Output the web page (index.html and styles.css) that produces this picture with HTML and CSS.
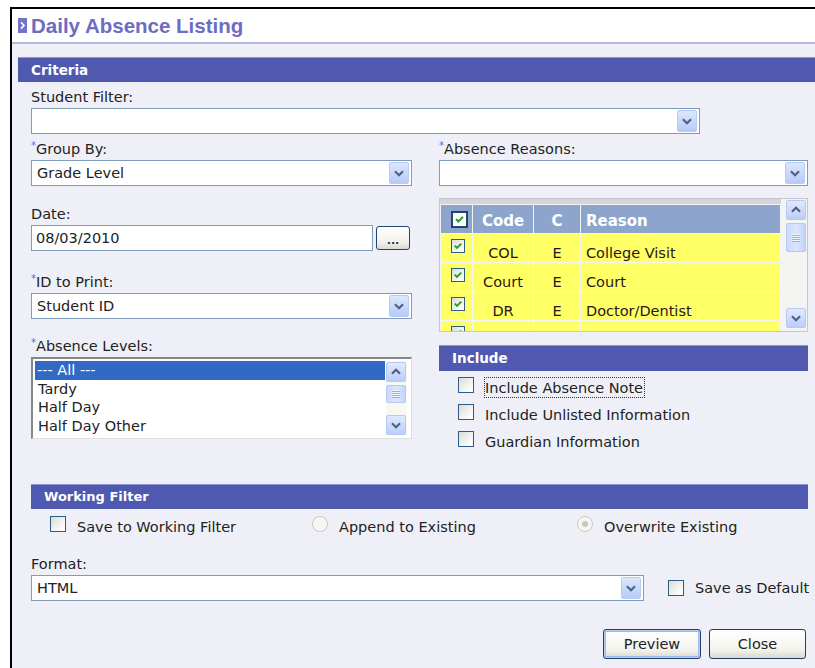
FILE: index.html
```html
<!DOCTYPE html>
<html lang="en">
<head>
<meta charset="utf-8">
<title>Daily Absence Listing</title>
<link rel="stylesheet" href="styles.css">
</head>
<body>
<svg class="icon-defs" width="0" height="0" aria-hidden="true">
  <defs>
    <symbol id="chev-down" viewBox="0 0 20 20"><path d="M5.5 8 L10 12.5 L14.5 8" fill="none" stroke="#4d6185" stroke-width="2.3"/></symbol>
    <symbol id="chev-up" viewBox="0 0 20 20"><path d="M5.5 12 L10 7.5 L14.5 12" fill="none" stroke="#4d6185" stroke-width="2.3"/></symbol>
    <symbol id="tick" viewBox="0 0 14 14"><path d="M3.2 6.6 L5.8 9.2 L10.8 4.2" fill="none" stroke="#21a121" stroke-width="2.2"/></symbol>
  </defs>
</svg>
<div class="window">
  <header class="title-bar">
    <svg class="title-icon" width="9" height="15" viewBox="0 0 9 15"><rect width="9" height="15" fill="#7272c9"/><path d="M3 4.3 L6 7.5 L3 10.7" fill="none" stroke="#fff" stroke-width="1.7"/></svg>
    <h1 class="title">Daily Absence Listing</h1>
  </header>
  <main class="content">
    <div class="section-bar">Criteria</div>
    <div class="form">
      <div class="field field-first">
        <span class="label">Student Filter:</span>
        <div class="select filter-select"><span class="select-value"></span><span class="drop-btn"><svg><use href="#chev-down"/></svg></span></div>
      </div>

      <div class="columns">
        <div class="col col-left">
          <div class="field">
            <span class="label"><span class="req">*</span>Group By:</span>
            <div class="select"><span class="select-value">Grade Level</span><span class="drop-btn"><svg><use href="#chev-down"/></svg></span></div>
          </div>
          <div class="field field-date">
            <span class="label">Date:</span>
            <div class="date-row">
              <div class="text-input">08/03/2010</div>
              <button class="dots-btn" type="button">...</button>
            </div>
          </div>
          <div class="field field-id">
            <span class="label"><span class="req">*</span>ID to Print:</span>
            <div class="select"><span class="select-value">Student ID</span><span class="drop-btn"><svg><use href="#chev-down"/></svg></span></div>
          </div>
          <div class="field field-levels">
            <span class="label"><span class="req">*</span>Absence Levels:</span>
            <div class="listbox">
              <ul class="list-items">
                <li class="selected">--- All ---</li>
                <li>Tardy</li>
                <li>Half Day</li>
                <li>Half Day Other</li>
              </ul>
              <div class="vscroll list-scroll">
                <span class="sb-btn"><svg><use href="#chev-up"/></svg></span>
                <span class="thumb"><span class="grip"></span></span>
                <span class="sb-btn sb-down"><svg><use href="#chev-down"/></svg></span>
              </div>
            </div>
          </div>
        </div>

        <div class="col col-right">
          <div class="field">
            <span class="label"><span class="req">*</span>Absence Reasons:</span>
            <div class="select"><span class="select-value"></span><span class="drop-btn"><svg><use href="#chev-down"/></svg></span></div>
          </div>
          <div class="grid">
            <div class="grid-body">
              <table class="reason-table">
                <colgroup><col class="c-cb"><col class="c-code"><col class="c-c"><col></colgroup>
                <thead>
                  <tr><th class="cb-head"><span class="cb head-cb"><svg><use href="#tick"/></svg></span></th><th>Code</th><th>C</th><th class="left">Reason</th></tr>
                </thead>
                <tbody>
                  <tr><td class="cb-cell"><span class="cb small"><svg><use href="#tick"/></svg></span></td><td class="center">COL</td><td class="center">E</td><td>College Visit</td></tr>
                  <tr><td class="cb-cell"><span class="cb small"><svg><use href="#tick"/></svg></span></td><td class="center">Court</td><td class="center">E</td><td>Court</td></tr>
                  <tr><td class="cb-cell"><span class="cb small"><svg><use href="#tick"/></svg></span></td><td class="center">DR</td><td class="center">E</td><td>Doctor/Dentist</td></tr>
                  <tr><td class="cb-cell"><span class="cb small"><svg><use href="#tick"/></svg></span></td><td></td><td></td><td></td></tr>
                </tbody>
              </table>
            </div>
            <div class="vscroll grid-scroll">
              <span class="sb-btn"><svg><use href="#chev-up"/></svg></span>
              <span class="thumb grid-thumb"><span class="grip"></span></span>
              <span class="sb-btn sb-down"><svg><use href="#chev-down"/></svg></span>
            </div>
          </div>
          <div class="section-bar include-bar">Include</div>
          <div class="check-list">
            <div class="check-row"><span class="cb"></span><span class="check-text focused">Include Absence Note</span></div>
            <div class="check-row"><span class="cb"></span><span class="check-text">Include Unlisted Information</span></div>
            <div class="check-row"><span class="cb"></span><span class="check-text">Guardian Information</span></div>
          </div>
        </div>
      </div>

      <div class="section-bar wf-bar">Working Filter</div>
      <div class="wf-row">
        <div class="check-row"><span class="cb"></span><span class="check-text">Save to Working Filter</span></div>
        <div class="check-row"><span class="radio"></span><span class="check-text">Append to Existing</span></div>
        <div class="check-row"><span class="radio checked"></span><span class="check-text">Overwrite Existing</span></div>
      </div>

      <div class="field field-format">
        <span class="label">Format:</span>
        <div class="format-row">
          <div class="select format-select"><span class="select-value">HTML</span><span class="drop-btn"><svg><use href="#chev-down"/></svg></span></div>
          <div class="check-row default-check"><span class="cb"></span><span class="check-text">Save as Default</span></div>
        </div>
      </div>

      <div class="actions">
        <button class="btn btn-default" type="button">Preview</button>
        <button class="btn" type="button">Close</button>
      </div>
    </div>
  </main>
</div>
</body>
</html>
```
FILE: styles.css
```css
* { box-sizing: border-box; }

html, body {
  margin: 0;
  padding: 0;
  background: #fff;
}

body {
  width: 815px;
  height: 668px;
  overflow: hidden;
  font-family: "DejaVu Sans", Verdana, sans-serif;
  font-size: 14.5px;
  color: #222;
}

.icon-defs { position: absolute; width: 0; height: 0; }

/* window frame */
.window {
  margin: 7px 0 0 10px;
  height: 661px;
  border-top: 2px solid #000;
  border-left: 2px solid #000;
  background: #eff0f7;
  overflow: hidden;
}

.title-bar {
  height: 35px;
  background: #fff;
  border-bottom: 2px solid #b5b9e0;
  display: flex;
  align-items: center;
  padding-left: 6px;
}

.title-icon { display: block; flex: none; }

.title {
  margin: 0 0 0 4px;
  font: bold 20.5px/33px "Liberation Sans", Arial, sans-serif;
  color: #6c6cc4;
}

.content { padding: 13px 0 0 6px; }

/* blue section headers */
.section-bar {
  height: 25px;
  background: #4e59af;
  border-top: 1px solid #8f96d2;
  color: #fff;
  font-weight: bold;
  font-size: 13.5px;
  line-height: 24px;
  padding-left: 13px;
}

.form {
  padding-left: 13px;
  display: flex;
  flex-direction: column;
}

.field { display: flex; flex-direction: column; }
.field-first { margin-top: 7px; }

.label {
  display: block;
  line-height: 16px;
  margin-bottom: 3px;
}

.req {
  color: #4a66ff;
  font-size: 10px;
  line-height: 10px;
  vertical-align: top;
}

/* drop-down lists */
.select {
  height: 26px;
  background: #fff;
  border: 1px solid #7f9db9;
  display: flex;
  align-items: center;
}

.filter-select { width: 669px; }

.select-value {
  flex: 1;
  padding-left: 5px;
  white-space: nowrap;
}

.drop-btn {
  width: 20px;
  height: 22px;
  margin-right: 2px;
  border: 1px solid #b9cbf3;
  border-radius: 2px;
  background: linear-gradient(#dce7fe, #b6cbf8);
  display: flex;
  flex: none;
}

.drop-btn svg, .sb-btn svg { width: 100%; height: 100%; display: block; }

.columns {
  display: flex;
  gap: 27px;
  margin-top: 7px;
}

.col-left { width: 381px; display: flex; flex-direction: column; }
.col-right { width: 369px; display: flex; flex-direction: column; }

.field-date { margin-top: 20px; }
.field-id { margin-top: 23px; }
.field-levels { margin-top: 19px; }

.date-row { display: flex; align-items: center; gap: 3px; }

.text-input {
  width: 342px;
  height: 26px;
  background: #fff;
  border: 1px solid #7f9db9;
  padding-left: 4px;
  line-height: 24px;
}

.dots-btn {
  width: 34px;
  height: 24px;
  padding: 6px 0 0;
  border: 1px solid #23456c;
  border-radius: 3px;
  background: linear-gradient(#ffffff, #f1f1ec 70%, #dcd8cc);
  font: bold 11px/12px "DejaVu Sans", sans-serif;
  color: #1d3350;
}

/* list box */
.listbox {
  height: 82px;
  background: #fff;
  border-top: 2px solid #878787;
  border-left: 2px solid #878787;
  border-right: 1px solid #dedde2;
  border-bottom: 1px solid #dedde2;
  padding: 2px 4px 2px 2px;
  display: flex;
}

.list-items {
  list-style: none;
  margin: 0;
  padding: 0;
  flex: 1;
}

.list-items li {
  line-height: 18.5px;
  padding-left: 3px;
  white-space: nowrap;
}

.list-items li.selected {
  background: #316ac5;
  color: #fff;
  padding-left: 2px;
}

/* scroll bars */
.vscroll {
  display: flex;
  flex-direction: column;
  flex: none;
}

.list-scroll {
  width: 21px;
  margin-left: 1px;
  padding: 1px 0;
  background: #f7f7f4;
}

.sb-btn {
  width: 20px;
  height: 20px;
  border: 1px solid #b7c9f1;
  border-radius: 2px;
  background: linear-gradient(#e1e9fe, #bbcef9);
  display: flex;
  flex: none;
}

.sb-down { margin-top: auto; }

.thumb {
  width: 20px;
  height: 18px;
  margin-top: 3px;
  border: 1px solid #b7c9f1;
  border-radius: 2px;
  background: linear-gradient(90deg, #c9d8fc, #dbe5fe 50%, #c4d5fb);
  display: flex;
  align-items: center;
  justify-content: center;
}

.grip {
  width: 8px;
  height: 8px;
  background: repeating-linear-gradient(#eef3fe 0 1px, #8fb0f1 1px 2px);
}

/* absence reason grid */
.grid {
  margin-top: 12px;
  height: 134px;
  border: 1px solid #c6c6cc;
  background: #f4f4f2;
  display: flex;
}

.grid-body {
  flex: 1;
  border-top: 5px solid #d5d4dc;
  background: #f4f4f4;
  overflow: hidden;
}

.reason-table {
  width: 100%;
  border-collapse: separate;
  border-spacing: 1px;
  table-layout: fixed;
}

.c-cb { width: 31px; }
.c-code { width: 60px; }
.c-c { width: 46px; }

.reason-table th {
  height: 28px;
  padding: 4px 0 0;
  background: #8da5cd;
  color: #fff;
  font-size: 15px;
  font-weight: bold;
  text-align: center;
  vertical-align: middle;
}

.reason-table th.left { text-align: left; padding-left: 5px; }
.reason-table th.cb-head { padding: 0 0 0 10px; text-align: left; }

.reason-table td {
  height: 28px;
  padding: 0 0 0 5px;
  background: #ffff66;
  color: #2a1616;
  line-height: 17px;
  vertical-align: bottom;
  white-space: nowrap;
}

.reason-table td.center { text-align: center; padding-left: 0; }

.reason-table td.cb-cell {
  vertical-align: top;
  padding: 5px 0 0 10px;
}

.grid-scroll {
  width: 26px;
  padding: 1px 1px 3px 5px;
}

.grid-thumb { height: 29px; }

/* check boxes and radios */
.cb {
  width: 16px;
  height: 16px;
  border: 1px solid #2d5c84;
  background: linear-gradient(135deg, #dcdcd6 0%, #fbfbfa 80%);
  display: block;
  flex: none;
}

.cb svg { width: 100%; height: 100%; display: block; }

.cb.small { width: 14px; height: 14px; }

.head-cb {
  width: 17px;
  height: 17px;
  border: 2px solid #24456a;
  background: #fff;
}

.radio {
  width: 16px;
  height: 16px;
  border-radius: 50%;
  border: 1px solid #cbc9bd;
  background: #f6f6f3;
  display: flex;
  align-items: center;
  justify-content: center;
  flex: none;
}

.radio.checked::after {
  content: "";
  width: 6px;
  height: 6px;
  border-radius: 50%;
  background: #c9c7bb;
}

.include-bar { margin-top: 13px; height: 26px; line-height: 25px; }

.check-list {
  display: flex;
  flex-direction: column;
  gap: 11px;
  margin-top: 6px;
  padding-left: 19px;
}

.check-row {
  display: flex;
  align-items: flex-start;
  height: 16px;
  white-space: nowrap;
}

.check-text {
  margin-left: 10px;
  padding: 3px 0 0 1px;
  line-height: 16px;
}

.check-text.focused {
  border: 1px dotted #333;
  padding: 2px 1px 1px 0;
}

/* working filter */
.wf-bar {
  margin-top: 37px;
  width: 777px;
  font-size: 13px;
}

.wf-row {
  display: grid;
  grid-template-columns: 262px 265px auto;
  margin-top: 7px;
  padding-left: 19px;
}

.field-format { margin-top: 24px; }

.format-row { display: flex; align-items: center; }

.format-select { width: 613px; }

.default-check { margin-left: 24px; align-items: center; }
.default-check .check-text { padding-top: 0; }

/* dialog buttons */
.actions {
  display: flex;
  justify-content: flex-end;
  gap: 8px;
  width: 775px;
  margin-top: 28px;
}

.btn {
  width: 97px;
  height: 30px;
  padding: 0;
  border: 1px solid #1f3f66;
  border-radius: 3px;
  background: linear-gradient(#ffffff, #f3f3ee 70%, #dbd7cc);
  font-family: "DejaVu Sans", Verdana, sans-serif;
  font-size: 14.5px;
  color: #222;
}

.btn-default {
  width: 98px;
  box-shadow: inset 0 0 0 1px #bcd0f3, inset 0 0 0 2px #9db9eb;
}
```
